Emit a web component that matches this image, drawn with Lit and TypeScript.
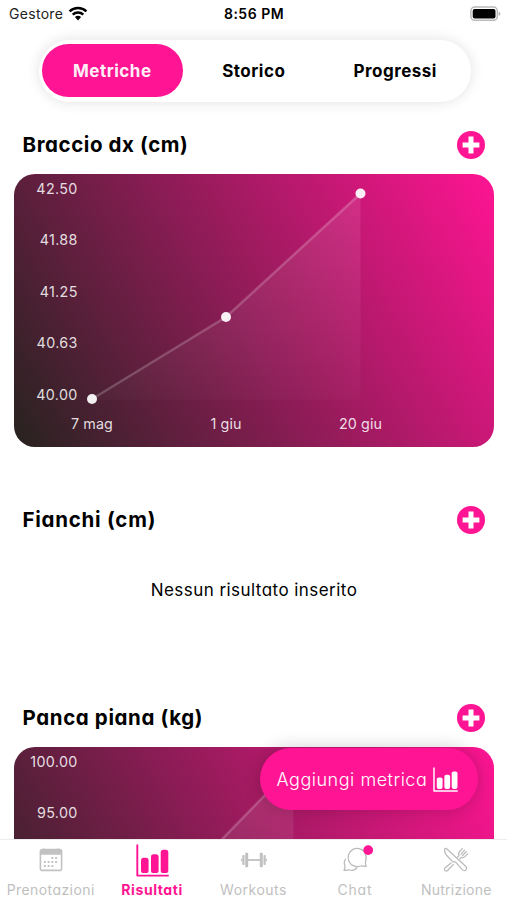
import { LitElement, html, svg, css } from "lit";
import { customElement, property } from "lit/decorators.js";

type Point = [number, number];

const barsIcon = html`<svg viewBox="0 0 33 33" class="bars" fill="currentColor">
  <path d="M1.3 1.2V31.6H32" fill="none" stroke="currentColor" stroke-width="1.9" stroke-linecap="round" stroke-linejoin="round" />
  <rect x="5" y="13.7" width="7.6" height="15.3" rx="2.6" />
  <rect x="15" y="10.3" width="7.6" height="18.7" rx="2.6" />
  <rect x="24.7" y="5.8" width="7.6" height="23.2" rx="2.6" />
</svg>`;

const plusIcon = html`<svg width="28" height="28" viewBox="0 0 28 28">
  <circle cx="14" cy="14" r="14" fill="#ff1493" />
  <path d="M14 5.6V22.4M5.6 14H22.4" stroke="#fff" stroke-width="5" />
</svg>`;

const calendarIcon = html`<svg width="24" height="24" viewBox="0 0 24 24" fill="none" stroke="#c2c2c2">
  <rect x="1.4" y="1.6" width="21.2" height="20.8" rx="2" stroke-width="1.6" />
  <path d="M1 3Q1 1.5 2.5 1.5H21.5Q23 1.5 23 3V6.8H1z" fill="#c2c2c2" stroke="none" />
  <path d="M4.8 .4V2.6M19.2 .4V2.6" stroke-width="1.5" />
  <path d="M12.4 10H20M4.9 14H20M4.9 18H16.2" stroke-width="1.9" stroke-dasharray="1.9 1.85" />
</svg>`;

const dumbbellIcon = html`<svg width="26" height="16" viewBox="0 0 26 16" fill="#c0c0c0">
  <rect x="7" y="7.1" width="12" height="1.8" />
  <rect x="4.2" y=".8" width="3" height="14.4" rx="1" />
  <rect x="18.8" y=".8" width="3" height="14.4" rx="1" />
  <rect x="1.3" y="3" width="2.2" height="10" rx=".8" />
  <rect x="22.5" y="3" width="2.2" height="10" rx=".8" />
  <rect x="0" y="6.8" width="1.4" height="2.4" />
  <rect x="24.6" y="6.8" width="1.4" height="2.4" />
</svg>`;

const chatIcon = html`<svg class="over" width="30" height="28" viewBox="0 0 30 28" fill="none" stroke="#bababa" stroke-width="1.25" stroke-linejoin="round">
  <path d="M24.6 6.2A9.1 9.1 0 1 0 20.4 20C22.3 19.6 23.6 20.3 26.3 20.4C25.2 18.4 25 17.3 25.6 15.4C26.6 12.6 26.3 9.6 25 7.2" />
  <path d="M5.9 12.8C4.1 15 3.9 17.4 4.9 19.6C5.3 21.2 4.7 22.6 4 24.3C6.3 24.6 8 23.8 9.6 24C12.4 24.9 15.3 24 17 21.4" />
  <circle cx="28.2" cy="4.1" r="4.9" fill="#ff1493" stroke="none" />
</svg>`;

const cutleryIcon = html`<svg width="26" height="26" viewBox="0 0 26 26" fill="none" stroke="#bababa" stroke-width="1.25" stroke-linecap="round" stroke-linejoin="round">
  <path d="M1.9 1.6C1.2 4 2 6.5 4 8.8L9.6 14.6L12.6 15.2L19.3 22.6C20.6 23.9 22.2 23.8 23 22.8C24 21.7 23.7 20.4 22.6 19.3L4.5 2.5C3.2 1.4 2.3 1 1.9 1.6z" />
  <path d="M8 16L2.2 20.8C1.2 21.8 1.2 22.9 2 23.6C2.8 24.3 3.8 24.2 4.8 23.2L10.4 17.6" />
  <path d="M14.6 10L16 8.6C15.1 6.7 15.4 5.6 16.8 4.2L19.4 1.6M16.8 12L18 10.4C19.6 11 21 10.6 22.2 9.4L24.6 6.8M18 7.2L21.6 3.2M19.5 8.5L23.2 4.7" />
</svg>`;

const wifiIcon = html`<svg width="20" height="15" viewBox="0 0 20 15" fill="none" stroke="#000" stroke-width="2.4">
  <path d="M1.6 5.3A12.2 12.2 0 0 1 18.4 5.3" />
  <path d="M4.7 8.7A7.6 7.6 0 0 1 15.3 8.7" />
  <path d="M10 14.4L6.9 11.1A4.5 4.5 0 0 1 13.1 11.1z" fill="#000" stroke="none" />
</svg>`;

const batteryIcon = html`<svg width="31" height="16" viewBox="0 0 31 16">
  <rect x=".9" y="1.1" width="26.4" height="13.2" rx="3.8" fill="#fff" stroke="#b9b9b9" stroke-width="1.5" />
  <rect x="2.7" y="2.9" width="22.8" height="9.6" rx="2" fill="#000" />
  <path d="M28.7 5.4Q30.4 6.2 30.4 7.7T28.7 10z" fill="#b0b0b0" />
</svg>`;

@customElement("metric-chart")
class MetricChart extends LitElement {
  @property({ attribute: false }) points: Point[] = [];
  @property({ attribute: false }) yLabels: string[] = [];
  @property({ attribute: false }) xLabels: [number, string][] = [];

  static styles = css`
    :host { display: block; width: 480px; height: 273px; border-radius: 21px; overflow: hidden; }
    svg { display: block; }
    .label { font: 400 14.3px Inter, "Liberation Sans", sans-serif; fill: #fff; fill-opacity: 0.86; letter-spacing: 0.35px; }
    .day { letter-spacing: 0.1px; }
  `;

  render() {
    const line = this.points.map((p) => p.join(",")).join(" ");
    const first = this.points[0][0];
    const last = this.points[this.points.length - 1][0];
    return html`<svg width="480" height="273" viewBox="0 0 480 273">
      <defs>
        <linearGradient id="bg" x1="0" y1="273" x2="480" y2="0" gradientUnits="userSpaceOnUse">
          <stop offset="0" stop-color="#26231f" />
          <stop offset="1" stop-color="#ff1493" />
        </linearGradient>
        <linearGradient id="shade" x1="0" y1="0" x2="0" y2="273" gradientUnits="userSpaceOnUse">
          <stop offset="0" stop-color="#fff" stop-opacity="0.11" />
          <stop offset="1" stop-color="#fff" stop-opacity="0" />
        </linearGradient>
      </defs>
      <rect width="480" height="273" fill="url(#bg)" />
      <polygon points="${first},226 ${line} ${last},226" fill="url(#shade)" />
      <polyline points=${line} fill="none" stroke="#fff" stroke-opacity="0.2" stroke-width="2.6" />
      ${this.points.map((p) => svg`<circle cx=${p[0]} cy=${p[1]} r="5" fill="#fff" fill-opacity="0.93" />`)}
      ${this.yLabels.map((t, i) => svg`<text class="label" x="63.7" y=${19.5 + i * 51.5} text-anchor="end">${t}</text>`)}
      ${this.xLabels.map(([x, t]) => svg`<text class="label day" x=${x} y="254.5" text-anchor="middle">${t}</text>`)}
    </svg>`;
  }
}

@customElement("app-root")
class AppRoot extends LitElement {
  static styles = css`
    :host {
      display: flex; flex-direction: column; position: relative; width: 507px; height: 900px;
      overflow: hidden; background: #fff; color: #000;
      font-family: Inter, "Liberation Sans", sans-serif; font-feature-settings: "cv11";
    }
    * { box-sizing: border-box; }
    svg { display: block; flex: none; }
    .over { overflow: visible; }
    span { white-space: nowrap; }
    .status { display: grid; grid-template-columns: 1fr auto 1fr; align-items: center; height: 27px; padding: 0 6px 0 9px; font-size: 14px; font-feature-settings: normal; flex: none; }
    .carrier { display: flex; align-items: center; gap: 5px; color: #222; letter-spacing: 0.3px; }
    .time { font-weight: 600; letter-spacing: 0.5px; margin-right: 2px; }
    .battery { justify-self: end; }
    .segments { display: flex; width: 432px; height: 62px; margin: 13px 0 0 39px; padding: 4px 5px 5px 2.5px; border-radius: 31px; box-shadow: 0 0 14px rgba(0, 0, 0, 0.12); flex: none; }
    .segment { flex: 1 1 0; display: flex; align-items: center; justify-content: center; border-radius: 27px; font-size: 17px; font-weight: 700; letter-spacing: 0.5px; }
    .segment.on { background: #ff1493; color: #fff0f8; }
    .content { flex: 1; min-height: 0; overflow: hidden; padding: 14px 13px 0 14px; }
    .head { display: flex; align-items: center; justify-content: space-between; height: 58px; padding: 0 9px 0 8.5px; font-size: 20.5px; line-height: 24px; font-weight: 700; }
    .filled { height: 375px; }
    .blank { height: 197.5px; }
    .note { display: flex; justify-content: center; padding-top: 30px; font-size: 17px; line-height: 22px; letter-spacing: 0.45px; }
    .fab { position: absolute; left: 260px; top: 748px; width: 218px; height: 62px; border-radius: 31px; display: flex; align-items: center; padding-left: 16.5px; gap: 6px; background: #ff1493; color: #fff; font-size: 18px; font-weight: 300; letter-spacing: 0.52px; box-shadow: 0 0 18px rgba(0, 0, 0, 0.2); }
    .fab .bars { width: 25px; height: 25px; }
    .tabs { position: relative; display: flex; height: 61px; border-top: 1px solid #ececec; background: #fff; flex: none; }
    .tab { flex: 1 1 0; display: flex; flex-direction: column; align-items: center; gap: 1px; color: #bfbfbf; font-size: 14px; line-height: 18px; }
    .glyph { display: flex; align-items: center; justify-content: center; height: 40px; }
    .tab.on { color: #ff1493; font-weight: 700; }
    .tab .bars { width: 33px; height: 33px; }
  `;

  private head(text: string, spacing: number) {
    return html`<div class="head"><span style="letter-spacing:${spacing}px">${text}</span>${plusIcon}</div>`;
  }

  private tab(text: string, icon: unknown, spacing: number, on = false) {
    return html`<div class="tab ${on ? "on" : ""}"><div class="glyph">${icon}</div><span style="letter-spacing:${spacing}px">${text}</span></div>`;
  }

  render() {
    return html`
      <div class="status">
        <div class="carrier"><span>Gestore</span>${wifiIcon}</div>
        <span class="time">8:56 PM</span>
        <div class="battery">${batteryIcon}</div>
      </div>
      <div class="segments">
        <div class="segment on"><span>Metriche</span></div>
        <div class="segment"><span>Storico</span></div>
        <div class="segment"><span>Progressi</span></div>
      </div>
      <div class="content">
        <div class="filled">
          ${this.head("Braccio dx (cm)", 0.58)}
          <metric-chart
            .points=${[[78, 225], [212, 143], [346.5, 19.5]]}
            .yLabels=${["42.50", "41.88", "41.25", "40.63", "40.00"]}
            .xLabels=${[[78, "7 mag"], [212, "1 giu"], [346.5, "20 giu"]]}
          ></metric-chart>
        </div>
        <div class="blank">
          ${this.head("Fianchi (cm)", 0.75)}
          <div class="note"><span>Nessun risultato inserito</span></div>
        </div>
        <div class="filled">
          ${this.head("Panca piana (kg)", 0.62)}
          <metric-chart
            .points=${[[78, 225], [179, 122], [279.5, 19]]}
            .yLabels=${["100.00", "95.00"]}
            .xLabels=${[]}
          ></metric-chart>
        </div>
      </div>
      <div class="fab"><span>Aggiungi metrica</span>${barsIcon}</div>
      <div class="tabs">
        ${this.tab("Prenotazioni", calendarIcon, 0.42)}
        ${this.tab("Risultati", barsIcon, 0.58, true)}
        ${this.tab("Workouts", dumbbellIcon, 0.5)}
        ${this.tab("Chat", chatIcon, 0.8)}
        ${this.tab("Nutrizione", cutleryIcon, 0.25)}
      </div>
    `;
  }
}
